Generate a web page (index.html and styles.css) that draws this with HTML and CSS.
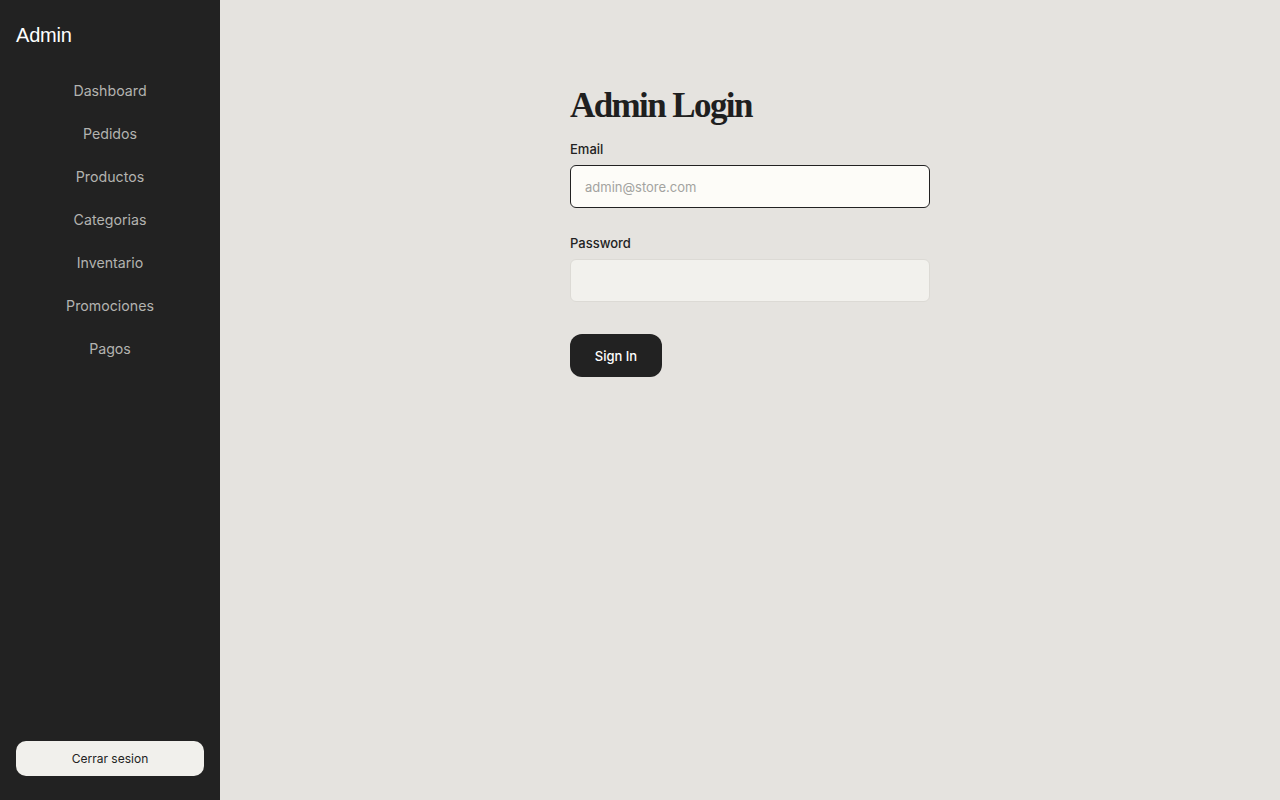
FILE: index.html
```html
<!DOCTYPE html>
<html lang="es">
<head>
<meta charset="utf-8">
<title>Admin Login</title>
<link rel="stylesheet" href="styles.css">
</head>
<body>
<div class="layout">
  <aside class="sidebar">
    <div class="brand">Admin</div>
    <nav class="nav">
      <a class="nav-link">Dashboard</a>
      <a class="nav-link">Pedidos</a>
      <a class="nav-link">Productos</a>
      <a class="nav-link">Categorias</a>
      <a class="nav-link">Inventario</a>
      <a class="nav-link">Promociones</a>
      <a class="nav-link">Pagos</a>
    </nav>
    <button class="logout">Cerrar sesion</button>
  </aside>
  <main class="main">
    <form class="login">
      <h1 class="title">Admin Login</h1>
      <div class="field">
        <label class="label">Email</label>
        <input class="input input-focus" type="text" placeholder="admin@store.com">
      </div>
      <div class="field">
        <label class="label">Password</label>
        <input class="input" type="password">
      </div>
      <button class="submit" type="button">Sign In</button>
    </form>
  </main>
</div>
</body>
</html>
```
FILE: styles.css
```css
* { box-sizing: border-box; }
html, body { margin: 0; height: 100%; }
body {
  font-family: Inter, "Liberation Sans", sans-serif;
  background: #e5e3df;
  color: #222;
}
.layout {
  display: flex;
  height: 800px;
}
.sidebar {
  width: 220px;
  flex: none;
  background: #222222;
  display: flex;
  flex-direction: column;
  padding: 22px 16px 24px;
}
.brand {
  font-family: "Liberation Sans", Arial, sans-serif;
  font-size: 20px;
  line-height: 26px;
  color: #ffffff;
  letter-spacing: -0.2px;
}
.nav {
  display: flex;
  flex-direction: column;
  align-items: center;
  margin-top: 32px;
  gap: 21px;
}
.nav-link {
  font-size: 14.2px;
  line-height: 22px;
  color: #b3b3b0;
  text-decoration: none;
}
.logout {
  margin-top: auto;
  height: 35px;
  border: none;
  border-radius: 10px;
  background: #f1f0ec;
  color: #222;
  font-family: Inter, "Liberation Sans", sans-serif;
  font-size: 12px;
}
.main {
  flex: 1;
  display: flex;
  justify-content: center;
  padding-top: 84px;
}
.login {
  width: 360px;
  display: flex;
  flex-direction: column;
}
.title {
  font-family: "Liberation Serif", "DejaVu Serif", serif;
  font-weight: 700;
  font-size: 35px;
  line-height: 44px;
  letter-spacing: -1.6px;
  margin: 0 0 13px;
  color: #1f1f1f;
}
.field {
  display: flex;
  flex-direction: column;
  gap: 8px;
  margin-bottom: 26px;
}
.field + .field { margin-top: 1px; }
.label {
  font-size: 13px;
  line-height: 16px;
  font-weight: 500;
  color: #222;
}
.input {
  height: 43px;
  border: 1px solid #dcdad5;
  border-radius: 6px;
  background: #f2f1ed;
  padding: 0 14px;
  font-family: Inter, "Liberation Sans", sans-serif;
  font-size: 13px;
  color: #222;
}
.input::placeholder { color: #a3a3a0; }
.input-focus {
  border-color: #222;
  background: #fdfcf8;
  outline: none;
}
.submit {
  align-self: flex-start;
  margin-top: 6px;
  height: 43px;
  width: 92px;
  border: none;
  border-radius: 12px;
  background: #222222;
  color: #ffffff;
  font-family: Inter, "Liberation Sans", sans-serif;
  font-size: 13px;
  font-weight: 500;
}
```
